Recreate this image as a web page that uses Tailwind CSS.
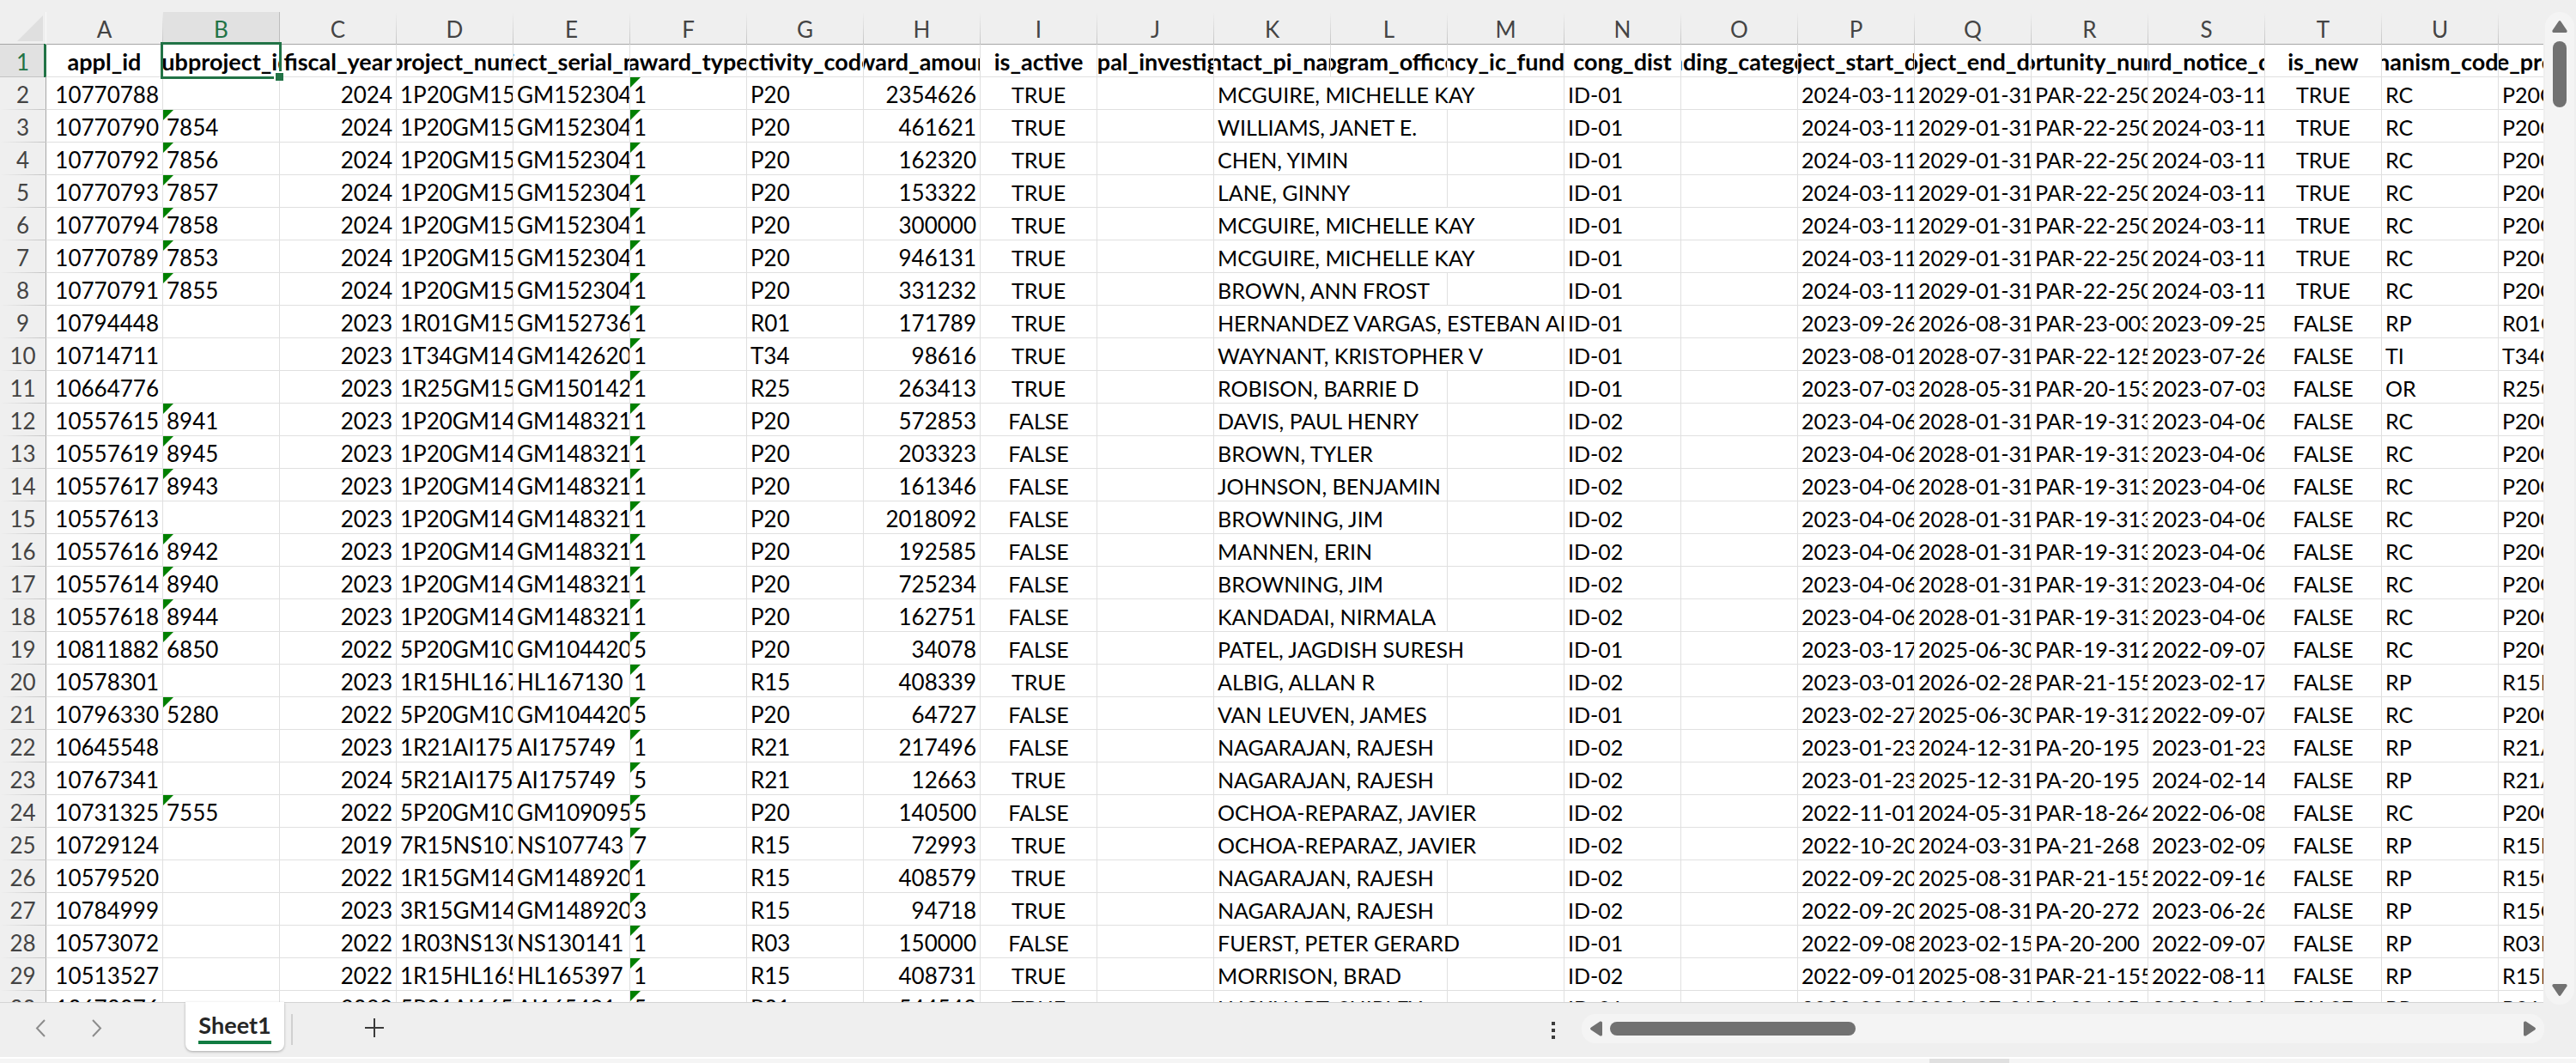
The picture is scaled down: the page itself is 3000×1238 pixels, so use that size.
<!DOCTYPE html>
<html lang="en">
<head>
<meta charset="utf-8">
<title>Sheet1</title>
<script src="https://cdn.jsdelivr.net/npm/@tailwindcss/browser@4"></script>
</head>
<body class="flex h-screen flex-col overflow-hidden bg-[#efefef] font-[Lato,sans-serif] text-[25px] leading-[34px] text-black">

<main class="flex min-h-0 flex-1">
  <div class="min-w-0 flex-1 overflow-hidden border-b border-[#d4d4d4] pt-[14px]">
    <table class="w-[3046px] table-fixed border-separate border-spacing-0 whitespace-nowrap">
      <thead>
        <tr id="letters">
          <th class="relative h-[38px] w-[54px] border-r border-b border-r-white/60 border-b-[#a6a6a6] p-0">
            <svg class="absolute right-[3px] bottom-[3px] size-[30px]" viewBox="0 0 30 30" aria-hidden="true"><path d="M30 0V30H0Z" fill="#dfdfdf"/></svg>
          </th>
        </tr>
      </thead>
      <tbody id="cells"></tbody>
    </table>
  </div>
  <div class="flex w-[38px] shrink-0 flex-col pt-[14px] pr-[2px] pl-[2px]">
    <div class="-mb-[2px] flex min-h-0 flex-1 flex-col items-center rounded-full bg-[#f4f4f4] py-[10px]">
      <button type="button" aria-label="Scroll up" class="h-[14px] w-[18px]"><svg class="block" width="18" height="14" viewBox="0 0 18 14"><path d="M7.6 1Q9-1 10.400 1L17.500 11.500Q18 14 16 14H2Q0 14 .5 11.500Z" fill="#717171"/></svg></button>
      <div class="mt-[10px] h-[77px] w-4 rounded-full bg-[#717171]"></div>
      <button type="button" aria-label="Scroll down" class="mt-auto h-[14px] w-[18px]"><svg class="block" width="18" height="14" viewBox="0 0 18 14"><path d="M7.600 13Q9 15 10.400 13L17.500 2.500Q18 0 16 0H2Q0 0 .5 2.500Z" fill="#717171"/></svg></button>
    </div>
  </div>
</main>

<nav class="flex h-[63px] shrink-0 items-start pr-[37px] pl-9" aria-label="Sheets">
  <div class="flex gap-[42px] pt-[17px]">
    <button type="button" aria-label="Previous sheet" class="size-6"><svg class="block" width="24" height="24" viewBox="0 0 24 24" fill="none" stroke="#8c8c8c" stroke-width="2"><path d="M16 3L7 12.500L16 22"/></svg></button>
    <button type="button" aria-label="Next sheet" class="size-6"><svg class="block" width="24" height="24" viewBox="0 0 24 24" fill="none" stroke="#8c8c8c" stroke-width="2"><path d="M6 3L15 12.500L6 22"/></svg></button>
  </div>
  <button type="button" class="relative z-10 -mt-px ml-[90px] flex h-[57px] w-[115px] flex-col items-center rounded-b-lg bg-white pt-[9px] text-[27px] leading-[36px] font-bold text-[#262626] shadow-[0_1px_3px_rgba(0,0,0,0.3)]">
    <span class="block h-10 border-b-4 border-[#107c41]">Sheet1</span>
  </button>
  <div class="mt-[13px] ml-2 h-9 w-[2px] bg-[#d0d0d0]"></div>
  <button type="button" aria-label="New sheet" class="mt-[17px] ml-[83px] size-6"><svg class="block" width="24" height="24" viewBox="0 0 24 24" stroke="#3b3b3b" stroke-width="2"><path d="M12 1V23M1 12H23"/></svg></button>
  <div class="ml-auto flex flex-col gap-1 pt-[22px] pr-[31px]">
    <span class="size-1 bg-[#3b3b3b]"></span><span class="size-1 bg-[#3b3b3b]"></span><span class="size-1 bg-[#3b3b3b]"></span>
  </div>
  <div class="mt-[13px] flex h-[34px] w-[1121px] max-w-[40%] items-center rounded-2xl bg-[#f4f4f4] px-[10px]">
    <button type="button" aria-label="Scroll left" class="h-[18px] w-[14px]"><svg class="block" width="14" height="18" viewBox="0 0 14 18"><path d="M1 7.600Q-1 9 1 10.400L11.500 17.500Q14 18 14 16V2Q14 0 11.500 .5Z" fill="#717171"/></svg></button>
    <div class="ml-[9px] h-4 w-[286px] rounded-full bg-[#717171]"></div>
    <button type="button" aria-label="Scroll right" class="ml-auto h-[18px] w-[14px]"><svg class="block" width="14" height="18" viewBox="0 0 14 18"><path d="M13 7.600Q15 9 13 10.400L2.500 17.500Q0 18 0 16V2Q0 0 2.500 .5Z" fill="#717171"/></svg></button>
  </div>
</nav>
<footer class="flex h-[7px] shrink-0 justify-end border-t-2 border-white bg-[#f5f5f5] pr-[22%]">
  <div class="h-full w-[93px] bg-[#e0e0e0]"></div>
</footer>

<script>
const names = ['appl_id','subproject_id','fiscal_year','project_num','project_serial_num','award_type','activity_code','award_amount','is_active','principal_investigators','contact_pi_name','program_officers','agency_ic_fundings','cong_dist','spending_categories','project_start_date','project_end_date','opportunity_number','award_notice_date','is_new','mechanism_code_dc','core_project_num'];

// appl_id | subproject | year | serial | type | activity | amount | active | contact | columns the contact spans | district | start | end | opportunity | notice | new | mechanism
const data = `10770788||2024|GM152304|1|P20|2354626|TRUE|MCGUIRE, MICHELLE KAY|3|ID-01|2024-03-11|2029-01-31|PAR-22-250|2024-03-11|TRUE|RC
10770790|7854|2024|GM152304|1|P20|461621|TRUE|WILLIAMS, JANET E.|2|ID-01|2024-03-11|2029-01-31|PAR-22-250|2024-03-11|TRUE|RC
10770792|7856|2024|GM152304|1|P20|162320|TRUE|CHEN, YIMIN|2|ID-01|2024-03-11|2029-01-31|PAR-22-250|2024-03-11|TRUE|RC
10770793|7857|2024|GM152304|1|P20|153322|TRUE|LANE, GINNY|2|ID-01|2024-03-11|2029-01-31|PAR-22-250|2024-03-11|TRUE|RC
10770794|7858|2024|GM152304|1|P20|300000|TRUE|MCGUIRE, MICHELLE KAY|3|ID-01|2024-03-11|2029-01-31|PAR-22-250|2024-03-11|TRUE|RC
10770789|7853|2024|GM152304|1|P20|946131|TRUE|MCGUIRE, MICHELLE KAY|3|ID-01|2024-03-11|2029-01-31|PAR-22-250|2024-03-11|TRUE|RC
10770791|7855|2024|GM152304|1|P20|331232|TRUE|BROWN, ANN FROST|2|ID-01|2024-03-11|2029-01-31|PAR-22-250|2024-03-11|TRUE|RC
10794448||2023|GM152736|1|R01|171789|TRUE|HERNANDEZ VARGAS, ESTEBAN ABELARDO|3|ID-01|2023-09-26|2026-08-31|PAR-23-003|2023-09-25|FALSE|RP
10714711||2023|GM142620|1|T34|98616|TRUE|WAYNANT, KRISTOPHER V|3|ID-01|2023-08-01|2028-07-31|PAR-22-125|2023-07-26|FALSE|TI
10664776||2023|GM150142|1|R25|263413|TRUE|ROBISON, BARRIE D|2|ID-01|2023-07-03|2028-05-31|PAR-20-153|2023-07-03|FALSE|OR
10557615|8941|2023|GM148321|1|P20|572853|FALSE|DAVIS, PAUL HENRY|2|ID-02|2023-04-06|2028-01-31|PAR-19-313|2023-04-06|FALSE|RC
10557619|8945|2023|GM148321|1|P20|203323|FALSE|BROWN, TYLER|2|ID-02|2023-04-06|2028-01-31|PAR-19-313|2023-04-06|FALSE|RC
10557617|8943|2023|GM148321|1|P20|161346|FALSE|JOHNSON, BENJAMIN|2|ID-02|2023-04-06|2028-01-31|PAR-19-313|2023-04-06|FALSE|RC
10557613||2023|GM148321|1|P20|2018092|FALSE|BROWNING, JIM|2|ID-02|2023-04-06|2028-01-31|PAR-19-313|2023-04-06|FALSE|RC
10557616|8942|2023|GM148321|1|P20|192585|FALSE|MANNEN, ERIN|2|ID-02|2023-04-06|2028-01-31|PAR-19-313|2023-04-06|FALSE|RC
10557614|8940|2023|GM148321|1|P20|725234|FALSE|BROWNING, JIM|2|ID-02|2023-04-06|2028-01-31|PAR-19-313|2023-04-06|FALSE|RC
10557618|8944|2023|GM148321|1|P20|162751|FALSE|KANDADAI, NIRMALA|2|ID-02|2023-04-06|2028-01-31|PAR-19-313|2023-04-06|FALSE|RC
10811882|6850|2022|GM104420|5|P20|34078|FALSE|PATEL, JAGDISH SURESH|3|ID-01|2023-03-17|2025-06-30|PAR-19-312|2022-09-07|FALSE|RC
10578301||2023|HL167130|1|R15|408339|TRUE|ALBIG, ALLAN R|2|ID-02|2023-03-01|2026-02-28|PAR-21-155|2023-02-17|FALSE|RP
10796330|5280|2022|GM104420|5|P20|64727|FALSE|VAN LEUVEN, JAMES|2|ID-01|2023-02-27|2025-06-30|PAR-19-312|2022-09-07|FALSE|RC
10645548||2023|AI175749|1|R21|217496|FALSE|NAGARAJAN, RAJESH|2|ID-02|2023-01-23|2024-12-31|PA-20-195|2023-01-23|FALSE|RP
10767341||2024|AI175749|5|R21|12663|TRUE|NAGARAJAN, RAJESH|2|ID-02|2023-01-23|2025-12-31|PA-20-195|2024-02-14|FALSE|RP
10731325|7555|2022|GM109095|5|P20|140500|FALSE|OCHOA-REPARAZ, JAVIER|3|ID-02|2022-11-01|2024-05-31|PAR-18-264|2022-06-08|FALSE|RC
10729124||2019|NS107743|7|R15|72993|TRUE|OCHOA-REPARAZ, JAVIER|3|ID-02|2022-10-20|2024-03-31|PA-21-268|2023-02-09|FALSE|RP
10579520||2022|GM148920|1|R15|408579|TRUE|NAGARAJAN, RAJESH|2|ID-02|2022-09-20|2025-08-31|PAR-21-155|2022-09-16|FALSE|RP
10784999||2023|GM148920|3|R15|94718|TRUE|NAGARAJAN, RAJESH|2|ID-02|2022-09-20|2025-08-31|PA-20-272|2023-06-26|FALSE|RP
10573072||2022|NS130141|1|R03|150000|FALSE|FUERST, PETER GERARD|3|ID-01|2022-09-08|2023-02-15|PA-20-200|2022-09-07|FALSE|RP
10513527||2022|HL165397|1|R15|408731|TRUE|MORRISON, BRAD|2|ID-02|2022-09-01|2025-08-31|PAR-21-155|2022-08-11|FALSE|RP
10673076||2022|AI165481|5|R01|544543|TRUE|LUCKHART, SHIRLEY|2|ID-01|2022-08-08|2026-07-31|PA-20-185|2022-06-21|FALSE|RP`.split('\n').map(r => r.split('|'));

const rule = '<span class="absolute top-0 -right-px h-full w-px bg-linear-to-b from-transparent to-[#c4c4c4]"></span>';
document.getElementById('letters').insertAdjacentHTML('beforeend', names.map((n, i) => {
  const c = String.fromCharCode(65 + i);
  return c === 'B'
    ? `<th scope="col" class="h-[38px] w-[136px] border-r border-b border-r-[#bdbdbd] border-b-[#a6a6a6] bg-[#e1e1e1] p-0 pt-[3px] text-[26px] leading-[34px] font-normal text-[#217346]">${c}</th>`
    : `<th scope="col" class="relative h-[38px] w-[136px] border-r border-b border-r-transparent border-b-[#a6a6a6] p-0 pt-[3px] text-[26px] leading-[34px] font-normal text-[#444]">${c}${rule}</th>`;
}).join(''));

const flag = '<span class="absolute top-0 left-0 size-3 bg-[#008000] [clip-path:polygon(0_0,100%_0,0_100%)]"></span>';
const box = {
  left: '<div class="h-[37px] overflow-hidden pt-[3px] pl-1 text-left">',
  code: '<div class="h-[37px] overflow-hidden pt-[3px] pl-1 text-left text-[26px] leading-[34px]">',
  right: '<div class="h-[37px] overflow-hidden pt-[3px] pr-1 text-right text-[26px] leading-[34px]">',
  center: '<div class="flex h-[37px] justify-center overflow-hidden pt-[3px]">'
};
const cell = (text, align = 'left', span = 1, mark = '') =>
  `<td colspan="${span}" class="relative h-[38px] border-r border-b border-[#e0e0e0] bg-white p-0">${mark}${text ? box[align] + text + '</div>' : ''}</td>`;
const rowHead = n => n === 1
  ? '<th scope="row" class="relative h-[38px] border-r border-b border-r-[#217346] border-b-[#c4c4c4] bg-[#e1e1e1] p-0 pt-[3px] text-[26px] leading-[34px] font-normal text-[#217346]">1<span class="absolute -top-px -bottom-px right-0 w-[2px] bg-[#217346]"></span></th>'
  : `<th scope="row" class="relative h-[38px] border-r border-b border-r-[#a6a6a6] border-b-transparent p-0 pt-[3px] text-[26px] leading-[34px] font-normal text-[#444]">${n}<span class="absolute -bottom-px left-0 h-px w-full bg-linear-to-r from-transparent to-[#c4c4c4]"></span></th>`;

const selection = '<span class="absolute -inset-[3px] z-10 border-3 border-[#217346]"></span><span class="absolute -right-[5px] -bottom-[5px] z-10 size-[11px] border-t-2 border-l-2 border-white bg-[#217346]"></span>';
let html = '<tr>' + rowHead(1) + names.map((n, i) =>
  `<td class="relative h-[38px] border-r border-b border-[#e0e0e0] bg-white p-0 text-[27px] leading-[34px] font-bold">${box.center}<span>${n}</span></div>${i === 1 ? selection : ''}</td>`).join('') + '</tr>';

data.forEach((r, i) => {
  const [id, sub, year, serial, type, act, amount, active, pi, span, dist, start, end, opp, notice, isNew, mech] = r;
  html += '<tr>' + rowHead(i + 2) + cell(id, 'right') + cell(sub, 'code', 1, sub ? flag : '') + cell(year, 'right')
    + cell(type + act + serial, 'code') + cell(serial, 'code') + cell(type, 'code', 1, flag) + cell(act, 'code') + cell(amount, 'right')
    + cell(active, 'center') + cell('') + cell(pi, 'left', span) + (span === '2' ? cell('') : '') + cell(dist) + cell('')
    + cell(start) + cell(end) + cell(opp) + cell(notice) + cell(isNew, 'center') + cell(mech) + cell(act + serial) + '</tr>';
});
document.getElementById('cells').innerHTML = html;
</script>
</body>
</html>
